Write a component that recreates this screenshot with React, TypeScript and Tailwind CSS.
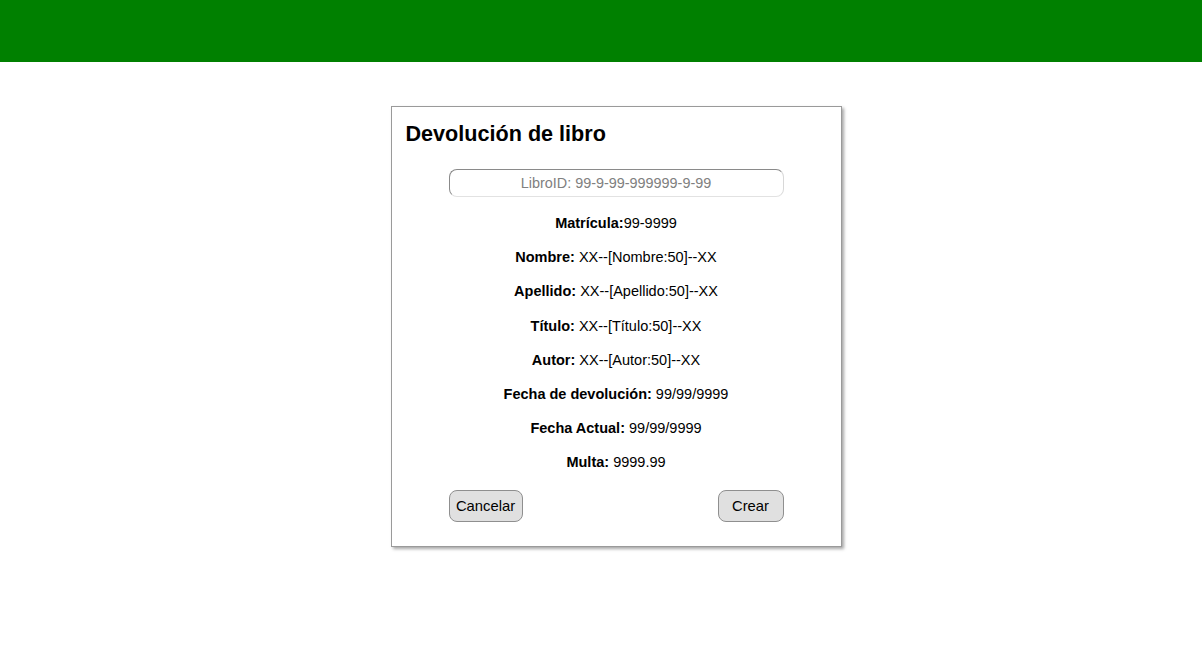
const fields = [
  { label: "Matrícula:", value: "99-9999", space: false },
  { label: "Nombre:", value: "XX--[Nombre:50]--XX", space: true },
  { label: "Apellido:", value: "XX--[Apellido:50]--XX", space: true },
  { label: "Título:", value: "XX--[Título:50]--XX", space: true },
  { label: "Autor:", value: "XX--[Autor:50]--XX", space: true },
  { label: "Fecha de devolución:", value: "99/99/9999", space: true },
  { label: "Fecha Actual:", value: "99/99/9999", space: true },
  { label: "Multa:", value: "9999.99", space: true },
];

export default function App() {
  return (
    <div className="min-h-screen bg-white font-['Liberation_Sans',Arial,sans-serif] text-black">
      {/* Top bar */}
      <div className="h-[62px] bg-[#008000]" />

      <div className="flex justify-center pt-[44px] pl-[30px]">
        <div className="w-[451px] border border-[#9a9a9a] bg-white pt-[13px] pb-[24px] shadow-[2px_2px_3px_rgba(0,0,0,0.35)]">
          <h2 className="pl-[14px] text-[21.6px] font-bold leading-[28px]">Devolución de libro</h2>

          <div className="mt-[21px] flex justify-center">
            <input
              type="text"
              placeholder="LibroID: 99-9-99-999999-9-99"
              className="h-[28px] w-[335px] rounded-[8px] border border-t-[#8a8a8a] border-l-[#8a8a8a] border-r-[#d8d8d8] border-b-[#e2e2e2] text-center text-[14.4px] outline-none placeholder:text-[#808080]"
            />
          </div>

          <div className="mt-[17px] flex flex-col items-center gap-[16px]">
            {fields.map((f) => (
              <p key={f.label} className="text-[14.5px] leading-[18.2px]">
                <b>{f.label}</b>
                {f.space ? " " : ""}
                {f.value}
              </p>
            ))}
          </div>

          <div className="mx-auto mt-[18px] flex w-[335px] justify-between">
            <button className="h-[32px] w-[74px] rounded-[8px] border border-[#8f8f8f] bg-[#e0e0e0] text-[14.8px]">
              Cancelar
            </button>
            <button className="h-[32px] w-[66px] rounded-[8px] border border-[#8f8f8f] bg-[#e0e0e0] text-[14.8px]">
              Crear
            </button>
          </div>
        </div>
      </div>
    </div>
  );
}
